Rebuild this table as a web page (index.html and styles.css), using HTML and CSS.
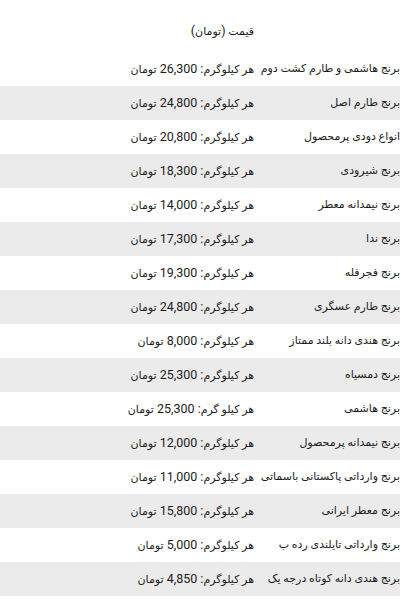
FILE: index.html
```html
<!DOCTYPE html>
<html lang="fa">
<head>
<meta charset="utf-8">
<title>قیمت برنج</title>
<link rel="stylesheet" href="styles.css">
</head>
<body>
<div class="table" dir="rtl">
  <div class="row head"><div class="name"></div><div class="price">قیمت <span class="num">(</span>تومان<span class="num">)</span></div></div>
  <div class="row"><div class="name">برنج هاشمی و طارم کشت دوم</div><div class="price">هر کیلوگرم<span class="num">: 26,300 </span>تومان</div></div>
  <div class="row alt"><div class="name">برنج طارم اصل</div><div class="price">هر کیلوگرم<span class="num">: 24,800 </span>تومان</div></div>
  <div class="row"><div class="name">انواع دودی پرمحصول</div><div class="price">هر کیلوگرم<span class="num">: 20,800 </span>تومان</div></div>
  <div class="row alt"><div class="name">برنج شیرودی</div><div class="price">هر کیلوگرم<span class="num">: 18,300 </span>تومان</div></div>
  <div class="row"><div class="name">برنج نیمدانه معطر</div><div class="price">هر کیلوگرم<span class="num">: 14,000 </span>تومان</div></div>
  <div class="row alt"><div class="name">برنج ندا</div><div class="price">هر کیلوگرم<span class="num">: 17,300 </span>تومان</div></div>
  <div class="row"><div class="name">برنج فجرفله</div><div class="price">هر کیلوگرم<span class="num">: 19,300 </span>تومان</div></div>
  <div class="row alt"><div class="name">برنج طارم عسگری</div><div class="price">هر کیلوگرم<span class="num">: 24,800 </span>تومان</div></div>
  <div class="row"><div class="name">برنج هندی دانه بلند ممتاز</div><div class="price">هر کیلوگرم<span class="num">: 8,000 </span>تومان</div></div>
  <div class="row alt"><div class="name">برنج دمسیاه</div><div class="price">هر کیلوگرم<span class="num">: 25,300 </span>تومان</div></div>
  <div class="row"><div class="name">برنج هاشمی</div><div class="price">هر کیلو گرم<span class="num">: 25,300 </span>تومان</div></div>
  <div class="row alt"><div class="name">برنج نیمدانه پرمحصول</div><div class="price">هر کیلوگرم<span class="num">: 12,000 </span>تومان</div></div>
  <div class="row"><div class="name">برنج وارداتی پاکستانی باسماتی</div><div class="price">هر کیلوگرم<span class="num">: 11,000 </span>تومان</div></div>
  <div class="row alt"><div class="name">برنج معطر ایرانی</div><div class="price">هر کیلوگرم<span class="num">: 15,800 </span>تومان</div></div>
  <div class="row"><div class="name">برنج وارداتی تایلندی رده ب</div><div class="price">هر کیلوگرم<span class="num">: 5,000 </span>تومان</div></div>
  <div class="row alt"><div class="name">برنج هندی دانه کوتاه درجه یک</div><div class="price">هر کیلوگرم<span class="num">: 4,850 </span>تومان</div></div>
</div>
</body>
</html>
```
FILE: styles.css
```css
html, body {
  margin: 0;
  padding: 0;
  background: #ffffff;
}
body {
  font-family: Roboto, "DejaVu Sans", sans-serif;
  font-size: 11px;
  color: #1c1c1c;
}
.table {
  width: 400px;
  margin: 0;
}
.row {
  display: grid;
  grid-template-columns: 141px 1fr;
  height: 34px;
  line-height: 34px;
}
.row.alt {
  background: #ebebeb;
}
.row.head {
  padding-top: 14px;
  padding-bottom: 4px;
}
.name {
  text-align: right;
  white-space: nowrap;
}
.price {
  text-align: right;
  padding-right: 5px;
  white-space: nowrap;
}
.num {
  font-size: 12.5px;
}
```
